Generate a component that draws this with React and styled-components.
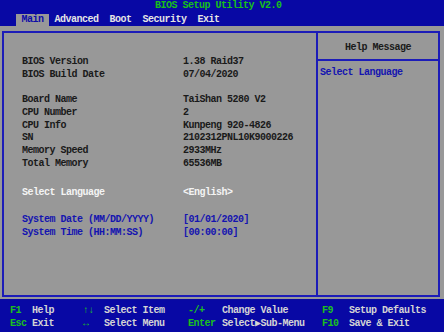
import styled, { createGlobalStyle } from 'styled-components';

const GlobalStyle = createGlobalStyle`
  html, body {
    margin: 0;
    padding: 0;
    background: #989898;
  }
  body {
    font-family: "Liberation Mono", "DejaVu Sans Mono", monospace;
    font-size: 10px;
    letter-spacing: -0.5px;
    font-weight: bold;
  }
`;

const Screen = styled.div`
  width: 444px;
  height: 332px;
  display: flex;
  flex-direction: column;
  background: #989898;
  overflow: hidden;
`;

const TopBar = styled.header`
  background: #0808a4;
  height: 26px;
  display: flex;
  flex-direction: column;
`;

const Title = styled.div`
  color: #18c018;
  height: 14px;
  line-height: 12px;
  padding-left: 155px;
  white-space: pre;
`;

const Tabs = styled.nav`
  display: flex;
  padding-left: 16px;
  height: 12px;
`;

const Tab = styled.div`
  padding: 0 5.5px;
  line-height: 12px;
  color: ${(p) => (p.active ? '#0c0ca8' : '#e4e4e4')};
  background: ${(p) => (p.active ? '#989898' : 'transparent')};
`;

const Body = styled.main`
  flex: 1;
  padding: 5px 4px 2px 2px;
  display: flex;
`;

const Panel = styled.section`
  flex: 1;
  border: 2px solid #1c1cb8;
  display: grid;
  grid-template-columns: 1fr 122px;
`;

const Settings = styled.div`
  padding: 23px 0 0 18px;
  display: flex;
  flex-direction: column;
`;

const Group = styled.div`
  margin-top: ${(p) => p.gap || 0}px;
`;

const Row = styled.div`
  display: grid;
  grid-template-columns: 161px 1fr;
  line-height: 12.7px;
  height: 12.7px;
  white-space: pre;
  color: ${(p) => p.color || '#1a1a1a'};
`;

const Help = styled.aside`
  border-left: 2px solid #1c1cb8;
  display: flex;
  flex-direction: column;
`;

const HelpHead = styled.div`
  height: 24px;
  border-bottom: 2px solid #1c1cb8;
  display: flex;
  align-items: center;
  justify-content: center;
  color: #1a1a1a;
  padding-top: 2px;
`;

const HelpText = styled.div`
  color: #1414b0;
  padding: 6px 0 0 2px;
  line-height: 12px;
`;

const Footer = styled.footer`
  background: #0808a4;
  height: 33px;
  padding: 6px 0 0 10px;
  box-sizing: border-box;
  display: grid;
  grid-template-columns: 22px 51px 21px 84px 34px 100px 27px 1fr;
  grid-auto-rows: 12.7px;
  line-height: 12.7px;
  white-space: pre;
`;

const Key = styled.span`
  color: #1cc01c;
`;

const Desc = styled.span`
  color: #d4d4d4;
`;

const info = [
  ['BIOS Version', '1.38 Raid37'],
  ['BIOS Build Date', '07/04/2020'],
];

const board = [
  ['Board Name', 'TaiShan 5280 V2'],
  ['CPU Number', '2'],
  ['CPU Info', 'Kunpeng 920-4826'],
  ['SN', '2102312PNL10K9000226'],
  ['Memory Speed', '2933MHz'],
  ['Total Memory', '65536MB'],
];

const time = [
  ['System Date (MM/DD/YYYY)', '[01/01/2020]'],
  ['System Time (HH:MM:SS)', '[00:00:00]'],
];

const keys = [
  ['F1', 'Help', '↑↓', 'Select Item', '-/+', 'Change Value', 'F9', 'Setup Defaults'],
  ['Esc', 'Exit', '↔', 'Select Menu', 'Enter', 'Select▶Sub-Menu', 'F10', 'Save & Exit'],
];

const App = () => {
  return (
    <Screen>
      <GlobalStyle />
      <TopBar>
        <Title>BIOS Setup Utility V2.0</Title>
        <Tabs>
          <Tab active>Main</Tab>
          <Tab>Advanced</Tab>
          <Tab>Boot</Tab>
          <Tab>Security</Tab>
          <Tab>Exit</Tab>
        </Tabs>
      </TopBar>
      <Body>
        <Panel>
          <Settings>
            <Group>
              {info.map(([k, v]) => (
                <Row key={k}>
                  <span>{k}</span>
                  <span>{v}</span>
                </Row>
              ))}
            </Group>
            <Group gap={13}>
              {board.map(([k, v]) => (
                <Row key={k}>
                  <span>{k}</span>
                  <span>{v}</span>
                </Row>
              ))}
            </Group>
            <Group gap={16}>
              <Row color="#f4f4f4">
                <span>Select Language</span>
                <span>&lt;English&gt;</span>
              </Row>
            </Group>
            <Group gap={15}>
              {time.map(([k, v]) => (
                <Row key={k} color="#1414b0">
                  <span>{k}</span>
                  <span>{v}</span>
                </Row>
              ))}
            </Group>
          </Settings>
          <Help>
            <HelpHead>Help Message</HelpHead>
            <HelpText>Select Language</HelpText>
          </Help>
        </Panel>
      </Body>
      <Footer>
        {keys.map((row) =>
          row.map((t, i) =>
            i % 2 === 0 ? <Key key={t + i}>{t}</Key> : <Desc key={t + i}>{t}</Desc>
          )
        )}
      </Footer>
    </Screen>
  );
};

export default App;
